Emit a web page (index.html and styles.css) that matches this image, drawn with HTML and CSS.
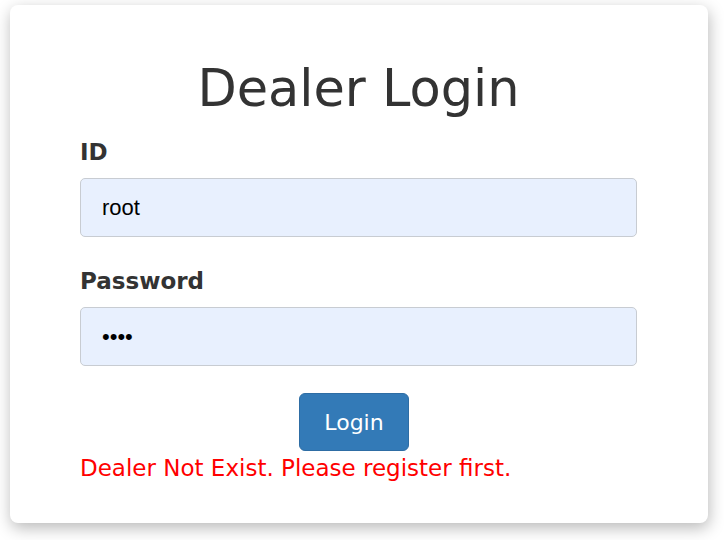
FILE: index.html
```html
<!DOCTYPE html>
<html>
<head>
<meta charset="utf-8">
<link rel="stylesheet" href="styles.css">
</head>
<body>
<div class="card">
  <h1 class="title">Dealer Login</h1>
  <form class="form">
    <label class="label" for="id">ID</label>
    <input class="field" id="id" type="text" value="root">
    <label class="label label-pw" for="pw">Password</label>
    <input class="field" id="pw" type="password" value="root">
    <div class="actions"><button class="btn" type="button">Login</button></div>
    <p class="error">Dealer Not Exist. Please register first.</p>
  </form>
</div>
</body>
</html>
```
FILE: styles.css
```css
html, body {
  margin: 0;
  padding: 0;
  background: #ffffff;
}
body {
  width: 724px;
  height: 540px;
  overflow: hidden;
  font-family: "DejaVu Sans", "Open Sans", sans-serif;
  color: #333333;
}
.card {
  box-sizing: border-box;
  margin: 5px 0 0 10px;
  width: 698px;
  height: 518px;
  background: #ffffff;
  border-radius: 8px;
  box-shadow: 1px 5px 16px rgba(0, 0, 0, 0.28);
  padding: 52px 71px 0 70px;
}
.title {
  margin: 0;
  text-align: center;
  font-size: 51px;
  line-height: 64px;
  font-weight: 400;
  color: #333333;
}
.form {
  display: flex;
  flex-direction: column;
  margin-top: 17px;
}
.label {
  font-size: 23px;
  line-height: 28px;
  font-weight: 700;
  color: #333333;
  margin-bottom: 12px;
}
.label-pw {
  margin-top: 30px;
}
.field {
  box-sizing: border-box;
  width: 557px;
  height: 59px;
  margin: 0;
  padding: 0 21px;
  border: 1px solid #c8ccd2;
  border-radius: 5px;
  background: #e8f0fe;
  font-family: "Liberation Sans", Arial, sans-serif;
  font-size: 22px;
  color: #000000;
  outline: none;
}
.actions {
  display: flex;
  justify-content: center;
  margin-top: 27px;
}
.btn {
  width: 110px;
  height: 58px;
  margin-right: 9px;
  border: 1px solid #2e6da4;
  border-radius: 6px;
  background: #337ab7;
  color: #ffffff;
  font-family: "DejaVu Sans", sans-serif;
  font-size: 22px;
  padding: 0;
}
.error {
  margin: 2px 0 0;
  color: #ff0000;
  font-size: 23px;
  line-height: 30px;
}
```
